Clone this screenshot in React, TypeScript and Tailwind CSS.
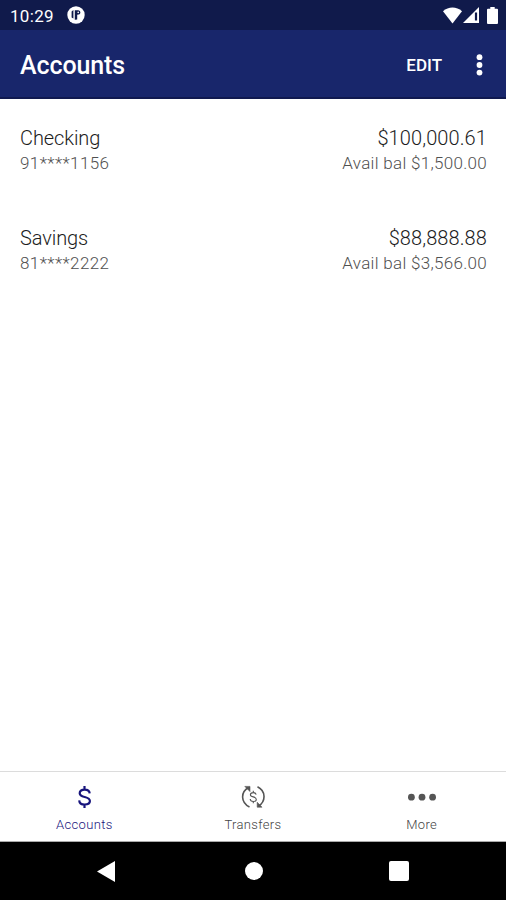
import React from "react";

interface Account {
  name: string;
  number: string;
  balance: string;
  available: string;
}

const accounts: Account[] = [
  { name: "Checking", number: "91****1156", balance: "$100,000.61", available: "Avail bal $1,500.00" },
  { name: "Savings", number: "81****2222", balance: "$88,888.88", available: "Avail bal $3,566.00" },
];

function StatusBar() {
  return (
    <div className="h-[30px] shrink-0 bg-[#101a4b] flex items-center text-white">
      <span className="ml-[10px] w-[57px] mt-[2px] text-[17px] leading-5 tracking-[0.3px] whitespace-nowrap">10:29</span>
      <svg className="w-[18px] h-[18px]" viewBox="0 0 18 18">
        <circle cx="9" cy="9" r="8.7" fill="#fff" />
        <path d="M4.6 5.6 6.4 4V12.6L4.6 11.6ZM7.8 4.2H11.2Q13.6 4.4 13.4 6.6 13.2 8.8 10.2 8.8V13.4L7.8 13.8Z" fill="#101a4b" />
        <circle cx="11.2" cy="6.4" r="0.8" fill="#fff" />
      </svg>
      <svg className="ml-auto w-[19px] h-[17px]" viewBox="0 0 19 17">
        <path d="M0 4.2C5.5-.7 13.5-.7 19 4.2L9.5 16.5Z" fill="#fff" />
      </svg>
      <svg className="ml-[1px] w-[16px] h-[16px]" viewBox="0 0 16 16">
        <path d="M16 0V16H0Z" fill="#fff" />
        <path d="M13 5.5V13.5" stroke="#101a4b" strokeWidth="2.2" />
      </svg>
      <svg className="ml-[8px] mr-[8px] w-[11px] h-[17px]" viewBox="0 0 11 17">
        <path d="M3.3 0H7.7V1.8H10Q11 1.8 11 2.8V16Q11 17 10 17H1Q0 17 0 16V2.8Q0 1.8 1 1.8H3.3Z" fill="#fff" />
      </svg>
    </div>
  );
}

function Header() {
  return (
    <header className="h-[69px] shrink-0 bg-[#18266b] border-b-2 border-[#10194f] flex items-center text-white pl-5">
      <h1 className="text-[25px] leading-8 font-medium mt-[5px] tracking-[-0.1px]">Accounts</h1>
      <button className="ml-auto mt-[3px] text-[17px] leading-6 font-medium">EDIT</button>
      <button className="ml-[34px] mr-[23px] mt-[2px]" aria-label="Menu">
        <svg className="block w-[7px] h-[22px]" viewBox="0 0 7 22" fill="#fff">
          <circle cx="3.5" cy="3.2" r="2.9" />
          <circle cx="3.5" cy="11" r="2.9" />
          <circle cx="3.5" cy="18.6" r="2.9" />
        </svg>
      </button>
    </header>
  );
}

function AccountRow({ account }: { account: Account }) {
  return (
    <div className="h-[100px] pt-[26px] pl-5 pr-[19px] flex justify-between">
      <div>
        <div className="text-[20px] leading-[26px] text-[#1c1c1c] font-light tracking-[-0.1px]">{account.name}</div>
        <div className="text-[17px] leading-6 text-[#505050] font-light tracking-[0.4px]">{account.number}</div>
      </div>
      <div className="text-right">
        <div className="text-[20px] leading-[26px] text-[#1c1c1c] font-light tracking-[0.1px]">{account.balance}</div>
        <div className="text-[17px] leading-6 text-[#505050] font-light tracking-[0.3px]">{account.available}</div>
      </div>
    </div>
  );
}

function BottomNav() {
  return (
    <nav className="h-[71px] shrink-0 border-t border-[#dcdcdc] border-b border-b-[#aaa] bg-white grid grid-cols-3 text-[13px] leading-4 font-light tracking-[0.35px] text-[#444]">
      <button className="flex flex-col items-center pt-[11px] text-[#17147c]">
        <svg className="w-7 h-7" viewBox="0 0 28 28" fill="none" stroke="#17147c" strokeWidth="2.2">
          <path d="M14.5 3V7M14.5 21V25M19.7 10.4C19.5 7.8 17.5 6.6 14.7 6.6 11.7 6.6 9.7 8 9.7 10.2 9.7 12.6 11.7 13.3 14.7 14 17.8 14.8 19.9 15.6 19.9 18 19.9 20.3 17.7 21.5 14.7 21.5 11.5 21.5 9.4 20.2 9.2 17.3" />
        </svg>
        <span className="mt-[6px]">Accounts</span>
      </button>
      <button className="flex flex-col items-center pt-[11px]">
        <svg className="w-7 h-7" viewBox="0 0 28 28" fill="none" stroke="#555" strokeWidth="1.6">
          <path d="M10.5 24C1.5 19.5 1.5 9 9.5 4.5M18.5 3.8C27 8 27 18.5 19.5 23" />
          <path d="M5.8 3.4H11V8.6ZM23 24.2H18.2V19.2Z" fill="#555" strokeWidth="0.6" />
          <path d="M14.3 7.7V9.8M14.3 18.2V20.3M17.1 11.6C16.9 10.2 15.8 9.6 14.3 9.6 12.6 9.6 11.4 10.4 11.4 11.7 11.4 13.1 12.7 13.5 14.3 13.9 16.1 14.4 17.3 14.9 17.3 16.4 17.3 17.8 16 18.5 14.3 18.5 12.4 18.5 11.3 17.6 11.2 16" strokeWidth="1.1" />
        </svg>
        <span className="mt-[6px]">Transfers</span>
      </button>
      <button className="flex flex-col items-center pt-[11px]">
        <svg className="w-7 h-7" viewBox="0 0 28 28" fill="#555">
          <circle cx="3.4" cy="14.2" r="3.4" />
          <circle cx="14" cy="14.2" r="3.4" />
          <circle cx="24.6" cy="14.2" r="3.4" />
        </svg>
        <span className="mt-[6px]">More</span>
      </button>
    </nav>
  );
}

function SystemNav() {
  return (
    <div className="h-[58px] shrink-0 bg-black flex items-center justify-between pl-[97px] pr-[97px]">
      <svg className="w-[18px] h-[21px]" viewBox="0 0 18 21">
        <path d="M18 0V21L0 10.5Z" fill="#fff" />
      </svg>
      <div className="ml-[3px] w-[18px] h-[18px] rounded-full bg-white" />
      <div className="w-[20px] h-[20px] rounded-[2px] bg-white" />
    </div>
  );
}

export default function App() {
  return (
    <div className="w-[506px] h-[900px] flex flex-col bg-white overflow-hidden font-['Roboto',sans-serif]">
      <StatusBar />
      <Header />
      <main className="flex-1">
        {accounts.map((account) => (
          <AccountRow key={account.number} account={account} />
        ))}
      </main>
      <BottomNav />
      <SystemNav />
    </div>
  );
}
